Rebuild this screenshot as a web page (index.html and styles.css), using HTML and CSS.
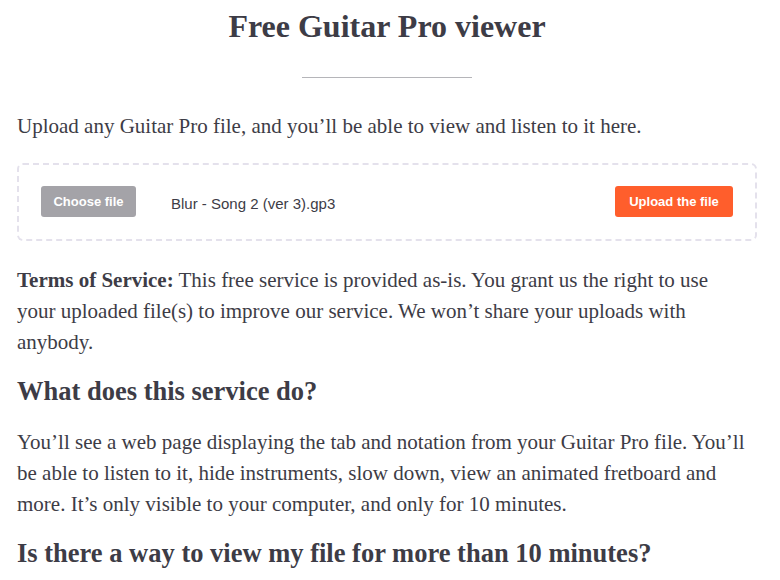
FILE: index.html
```html
<!DOCTYPE html>
<html>
<head>
<meta charset="utf-8">
<link rel="stylesheet" href="styles.css">
</head>
<body>
<main class="page">
  <h1 class="title">Free Guitar Pro viewer</h1>
  <hr class="rule">
  <p class="text intro">Upload any Guitar Pro file, and you’ll be able to view and listen to it here.</p>
  <form class="upload">
    <span class="btn btn-choose">Choose file</span>
    <span class="filename">Blur - Song 2 (ver 3).gp3</span>
    <span class="btn btn-upload">Upload the file</span>
  </form>
  <p class="text terms"><strong>Terms of Service:</strong> This free service is provided as-is. You grant us the right to use your uploaded file(s) to improve our service. We won’t share your uploads with anybody.</p>
  <h2 class="heading">What does this service do?</h2>
  <p class="text">You’ll see a web page displaying the tab and notation from your Guitar Pro file. You’ll be able to listen to it, hide instruments, slow down, view an animated fretboard and more. It’s only visible to your computer, and only for 10 minutes.</p>
  <h2 class="heading">Is there a way to view my file for more than 10 minutes?</h2>
</main>
</body>
</html>
```
FILE: styles.css
```css
html, body {
  margin: 0;
  padding: 0;
  background: #fff;
}
.page {
  padding: 0 23px 0 17px;
  font-family: "Liberation Serif", "Times New Roman", serif;
  color: #3d3c46;
}
.title {
  margin: 6px 0 0;
  font-size: 32px;
  line-height: 40px;
  text-align: center;
  font-weight: bold;
}
.rule {
  width: 170px;
  margin: 31px auto 0;
  border: 0;
  border-top: 1px solid #b5b5b9;
  height: 0;
}
.text {
  font-size: 21px;
  line-height: 31px;
  margin: 0;
}
.intro {
  margin-top: 33px;
}
.terms {
  max-width: 720px;
}
.upload {
  margin: 21px 0 24px;
  border: 2px dashed #e4e1ec;
  border-radius: 6px;
  padding: 21px 22px 22px;
  display: flex;
  align-items: center;
}
.btn {
  font-family: "Liberation Sans", Arial, sans-serif;
  font-weight: bold;
  font-size: 13px;
  color: #fff;
  height: 31px;
  line-height: 31px;
  border-radius: 3px;
  box-sizing: border-box;
  text-align: center;
}
.btn-choose {
  background: #a4a3a8;
  width: 95px;
}
.filename {
  font-family: "Liberation Sans", Arial, sans-serif;
  font-size: 15px;
  margin-left: 35px;
  margin-top: 4px;
  flex: 1;
}
.btn-upload {
  background: #ff5e2c;
  width: 118px;
}
.heading {
  font-size: 26.5px;
  line-height: 32px;
  margin: 17px 0 20px;
  font-weight: bold;
}
```
